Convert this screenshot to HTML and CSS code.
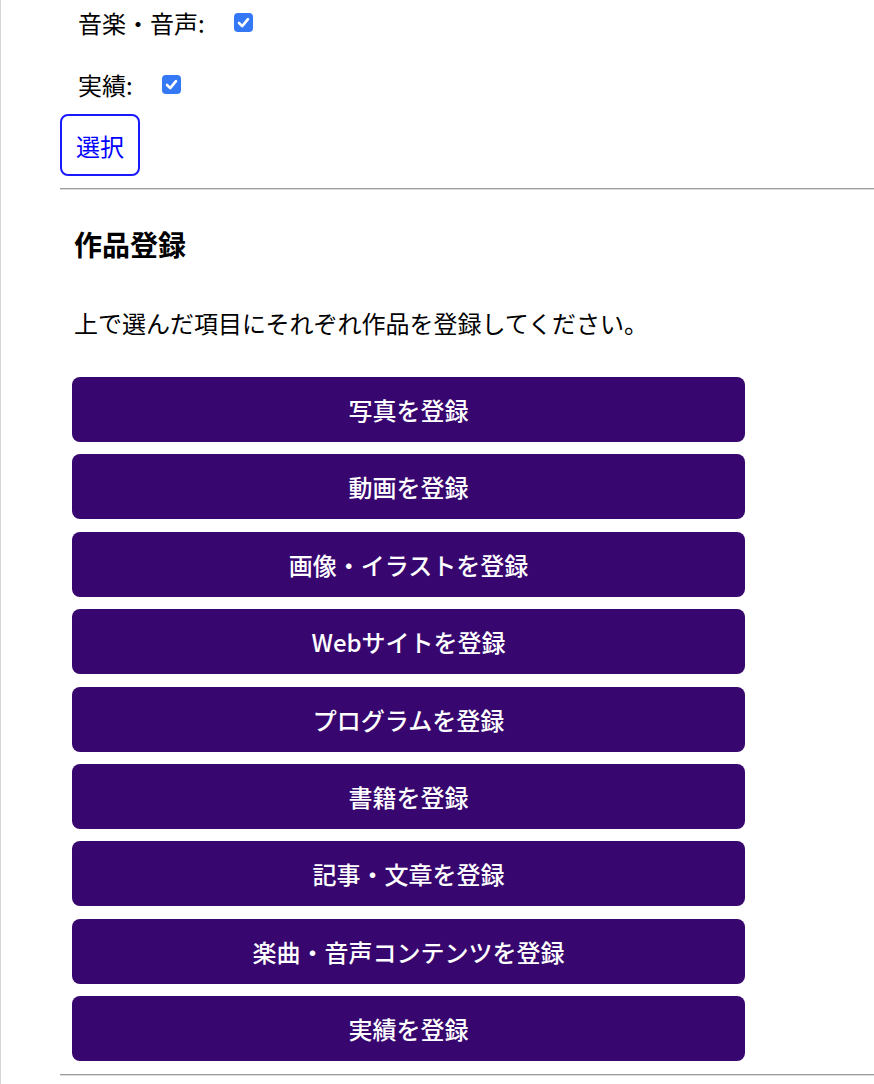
FILE: index.html
```html
<!DOCTYPE html>
<html lang="ja">
<head>
  <meta charset="utf-8">
  <title>作品登録</title>
  <link rel="stylesheet" href="styles.css">
</head>
<body>
  <div class="page">
    <form class="category-form">
      <label class="row">
        <span>音楽・音声:</span>
        <span class="check"><svg viewBox="0 0 19 19" width="19" height="19"><path d="M5 10 L8.2 13.2 L14 6.2" fill="none" stroke="#fff" stroke-width="2.6" stroke-linecap="round" stroke-linejoin="round"/></svg></span>
      </label>
      <label class="row">
        <span>実績:</span>
        <span class="check"><svg viewBox="0 0 19 19" width="19" height="19"><path d="M5 10 L8.2 13.2 L14 6.2" fill="none" stroke="#fff" stroke-width="2.6" stroke-linecap="round" stroke-linejoin="round"/></svg></span>
      </label>
      <button type="button" class="select-btn">選択</button>
    </form>
    <hr class="divider">
    <div class="works">
      <h3 class="works-title">作品登録</h3>
      <p class="works-text">上で選んだ項目にそれぞれ作品を登録してください。</p>
      <div class="work-list">
        <button type="button" class="work-btn">写真を登録</button>
        <button type="button" class="work-btn">動画を登録</button>
        <button type="button" class="work-btn">画像・イラストを登録</button>
        <button type="button" class="work-btn">Webサイトを登録</button>
        <button type="button" class="work-btn">プログラムを登録</button>
        <button type="button" class="work-btn">書籍を登録</button>
        <button type="button" class="work-btn">記事・文章を登録</button>
        <button type="button" class="work-btn">楽曲・音声コンテンツを登録</button>
        <button type="button" class="work-btn">実績を登録</button>
      </div>
    </div>
    <hr class="divider last">
  </div>
</body>
</html>
```
FILE: styles.css
```css
body {
  margin: 0;
  font-family: "Noto Sans CJK JP", "Noto Sans", sans-serif;
  color: #000;
  background: #fff;
  overflow: hidden;
}
.page {
  min-height: 1084px;
  border-left: 1px solid #d6d6d6;
  padding-left: 59px;
}
.category-form {
  display: flex;
  flex-direction: column;
  align-items: flex-start;
}
.row {
  display: flex;
  align-items: center;
  gap: 29px;
  height: 44px;
  padding-left: 18px;
  font-size: 24px;
  margin-bottom: 18px;
}
.row + .row {
  margin-bottom: 8px;
}
.check {
  display: block;
  width: 19px;
  height: 19px;
  border-radius: 4px;
  background-color: #3478f6;
}
.check svg {
  display: block;
}
.select-btn {
  width: 80px;
  height: 62px;
  border: 2px solid #1a1aff;
  border-radius: 8px;
  background: #fff;
  color: #0000ff;
  font-family: inherit;
  font-size: 24px;
  padding: 0;
}
.divider {
  margin: 12px 0 0;
  height: 0;
  border: 0;
  border-top: 1px solid #9c9c9c;
  border-bottom: 1px solid #dcdcdc;
}
.divider.last {
  margin-top: 13px;
}
.works {
  padding-left: 12px;
}
.works-title {
  margin: 35px 0 0 2px;
  font-size: 28px;
  line-height: 39px;
  font-weight: 700;
}
.works-text {
  margin: 43px 0 0 2px;
  font-size: 24px;
  line-height: 32px;
}
.work-list {
  display: flex;
  flex-direction: column;
  gap: 12.4px;
  margin-top: 38px;
}
.work-btn {
  width: 673px;
  height: 65px;
  border: 0;
  border-radius: 8px;
  background-color: #37066f;
  color: #fff;
  font-family: inherit;
  font-size: 24px;
  font-weight: 500;
  padding: 0;
}
```
